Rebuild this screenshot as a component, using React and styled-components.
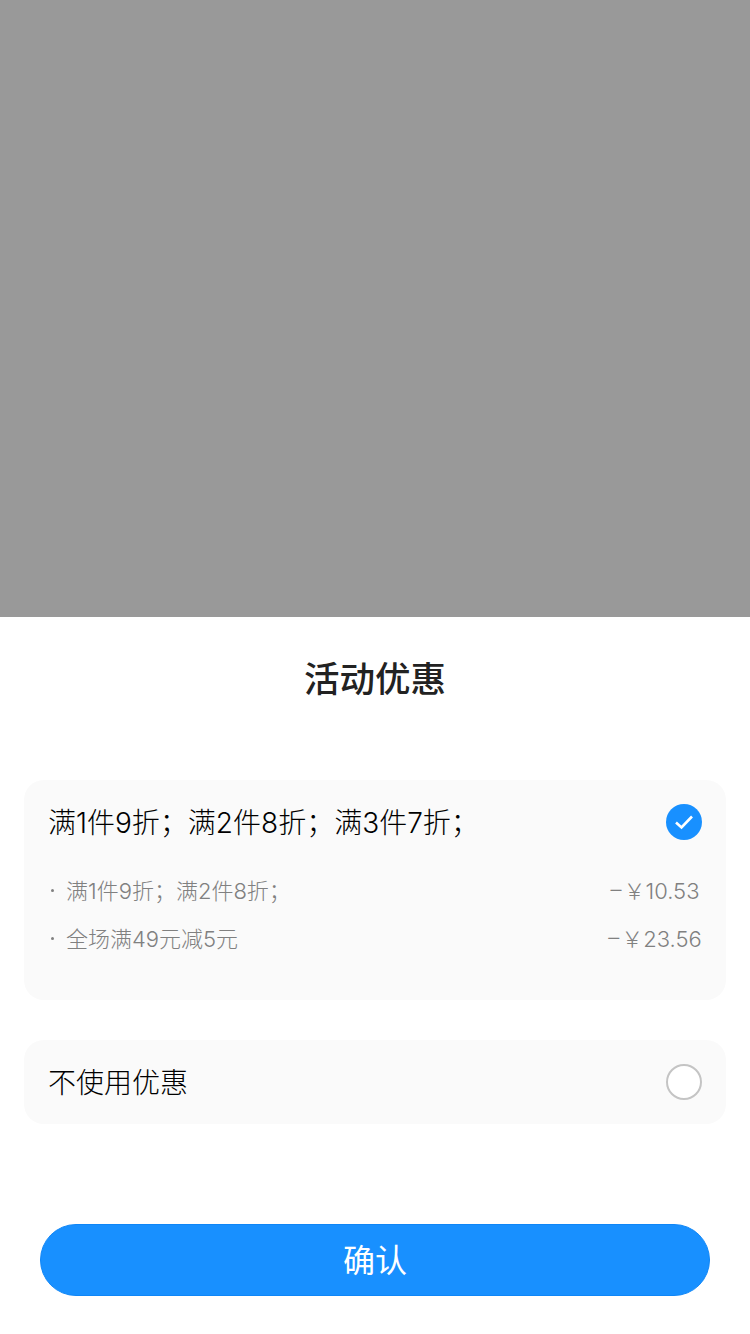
import React from "react";
import styled, { createGlobalStyle } from "styled-components";

const GlobalStyle = createGlobalStyle`
  html, body {
    margin: 0;
    padding: 0;
    background: #fff;
  }
  body {
    font-family: "Inter", "Noto Sans CJK SC", sans-serif;
    font-weight: 300;
  }
`;

const Page = styled.div`
  width: 750px;
  height: 1334px;
  display: flex;
  flex-direction: column;
  overflow: hidden;
`;

const Mask = styled.div`
  height: 617px;
  flex-shrink: 0;
  background: #999999;
`;

const Sheet = styled.section`
  flex: 1;
  display: flex;
  flex-direction: column;
  background: #fff;
`;

const Title = styled.h2`
  margin: 0;
  height: 163px;
  padding-top: 40px;
  box-sizing: border-box;
  font-size: 35.5px;
  line-height: 46px;
  font-weight: 500;
  color: #222;
  text-align: center;
`;

const OptionList = styled.div`
  display: flex;
  flex-direction: column;
  gap: 40px;
  padding: 0 24px;
`;

const Card = styled.div`
  background: #fafafa;
  border-radius: 20px;
  padding: 0 24px;
`;

const CardHead = styled.div`
  display: flex;
  align-items: center;
  justify-content: space-between;
  height: 84px;
  font-size: 28px;
  color: #000;
`;

const HeadText = styled.span`
  margin-top: -2px;
`;

const Radio = styled.span`
  width: 36px;
  height: 36px;
  box-sizing: border-box;
  border-radius: 50%;
  display: flex;
  align-items: center;
  justify-content: center;
  background: ${(p) => (p.$checked ? "#1890ff" : "#fff")};
  border: ${(p) => (p.$checked ? "none" : "2px solid #c4c4c4")};
`;

const Details = styled.ul`
  list-style: none;
  margin: 0;
  padding: 5px 0 43px;
  display: flex;
  flex-direction: column;
  gap: 8px;
`;

const Detail = styled.li`
  height: 40px;
  display: flex;
  align-items: center;
  justify-content: space-between;
  font-size: 22px;
  color: #808080;
`;

const Label = styled.span`
  display: flex;
  align-items: center;
`;

const Dot = styled.i`
  width: 3px;
  height: 3px;
  margin: 2px 12px 0 3px;
  border-radius: 50%;
  background: #808080;
`;

const Price = styled.span`
  width: 94px;
  display: flex;
  align-items: center;
  justify-content: center;
  gap: 2px;
  white-space: nowrap;
`;

const Footer = styled.div`
  padding: 100px 40px 0;
`;

const ConfirmButton = styled.button`
  display: block;
  width: 100%;
  height: 72px;
  padding: 0 0 5px;
  border: 1px solid #0f86f7;
  border-radius: 36px;
  background: #1890ff;
  color: #fff;
  font-family: inherit;
  font-weight: 400;
  font-size: 32px;
`;

const Check = () => (
  <svg width="20" height="16" viewBox="0 0 20 16" fill="none">
    <path d="M2 8.5 L7.5 13.5 L18 2.5" stroke="#fff" strokeWidth="2.6" />
  </svg>
);

const discounts = [
  { name: "满1件9折；满2件8折；", amount: "10.53" },
  { name: "全场满49元减5元", amount: "23.56" },
];

export default function App() {
  return (
    <Page>
      <GlobalStyle />
      <Mask />
      <Sheet>
        <Title>活动优惠</Title>
        <OptionList>
          <Card>
            <CardHead>
              <HeadText>满1件9折；满2件8折；满3件7折；</HeadText>
              <Radio $checked>
                <Check />
              </Radio>
            </CardHead>
            <Details>
              {discounts.map((item) => (
                <Detail key={item.name}>
                  <Label>
                    <Dot />
                    {item.name}
                  </Label>
                  <Price>
                    <span>–</span>
                    <span>￥{item.amount}</span>
                  </Price>
                </Detail>
              ))}
            </Details>
          </Card>
          <Card>
            <CardHead>
              <HeadText>不使用优惠</HeadText>
              <Radio />
            </CardHead>
          </Card>
        </OptionList>
        <Footer>
          <ConfirmButton>确认</ConfirmButton>
        </Footer>
      </Sheet>
    </Page>
  );
}
